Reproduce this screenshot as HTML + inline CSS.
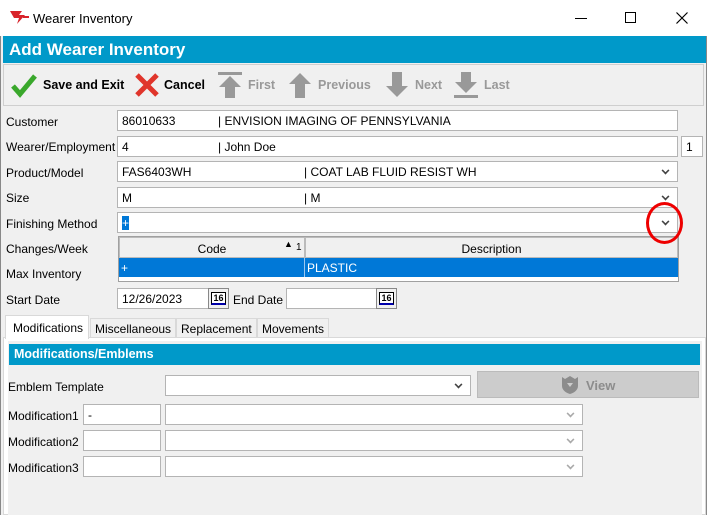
<!DOCTYPE html>
<html><head><meta charset="utf-8"><style>
*{margin:0;padding:0;box-sizing:border-box}
body{width:710px;height:515px;overflow:hidden;background:#fff;font-family:"Liberation Sans",sans-serif;font-size:12px;color:#000;position:relative}
.a{position:absolute}
.lbl{position:absolute;font-size:12px;color:#000}
.in{position:absolute;background:#fff;border:1px solid #b4b4b4;height:21px;font-size:12px;padding:3px 0 0 4px;white-space:nowrap}
.chev{position:absolute;right:8px;top:5px;width:7px;height:7px;border-right:2px solid #444;border-bottom:2px solid #444;transform:rotate(45deg) scale(.8);}
.tb{position:absolute;top:78px;font-weight:bold;font-size:12.5px}
.tab{position:absolute;top:318px;height:20px;border:1px solid #d9d9d9;background:#f0f0f0;font-size:12px;padding:3px 4px 0}
.cal{position:absolute;width:21px;height:21px;background:#f0f0f0;border:1px solid #888;font-size:9px;font-weight:bold;text-align:center;padding-top:4px}
.cal span{border:1px solid #000;border-bottom:2px solid #00a;background:#fff;padding:0 1px}
</style></head><body>
<svg class="a" style="left:9px;top:9px" width="22" height="16" viewBox="0 0 22 16"><path d="M1 2h12l-3 4h6l-8 9 2-6H5z" fill="#d8232a"/><path d="M14 8h6" stroke="#d8232a" stroke-width="2"/></svg>
<div class="lbl" style="left:33px;top:11px;font-size:13px">Wearer Inventory</div>
<div class="a" style="left:575px;top:18px;width:12px;height:1px;background:#000"></div>
<div class="a" style="left:625px;top:12px;width:11px;height:11px;border:1px solid #000"></div>
<svg class="a" style="left:676px;top:12px" width="12" height="12" viewBox="0 0 12 12"><path d="M0.5 0.5l11 11M11.5 0.5l-11 11" stroke="#000" stroke-width="1.2"/></svg>
<div class="a" style="left:0;top:36px;width:707px;height:479px;background:#f0f0f0;border-left:1px solid #888;border-right:1px solid #888"></div>
<div class="a" style="left:3px;top:36px;width:703px;height:27px;background:#0099c9"></div>
<div class="lbl" style="left:9px;top:40px;font-size:17px;font-weight:bold;color:#fff">Add Wearer Inventory</div>
<div class="a" style="left:3px;top:64px;width:701px;height:42px;background:#f0f0f0;border:1px solid #cfcfcf"></div>
<svg class="a" style="left:11px;top:72px" width="26" height="26" viewBox="0 0 26 26"><path d="M2 14l7 8L24 4" fill="none" stroke="#3aa82c" stroke-width="5"/></svg>
<div class="tb" style="left:43px">Save and Exit</div>
<svg class="a" style="left:134px;top:72px" width="26" height="26" viewBox="0 0 26 26"><path d="M3 3l20 20M23 3L3 23" stroke="#e0352b" stroke-width="5"/></svg>
<div class="tb" style="left:164px">Cancel</div>
<svg class="a" style="left:217px;top:71px" width="26" height="28" viewBox="0 0 26 28"><rect x="1" y="1" width="24" height="3" fill="#999"/><path d="M13 5l11 11h-6v11h-10v-11h-6z" fill="#999"/></svg>
<div class="tb" style="left:248px;color:#999">First</div>
<svg class="a" style="left:287px;top:71px" width="26" height="28" viewBox="0 0 26 28"><path d="M13 2l11 11h-6v14h-10v-14h-6z" fill="#999"/></svg>
<div class="tb" style="left:318px;color:#999">Previous</div>
<svg class="a" style="left:384px;top:71px" width="26" height="28" viewBox="0 0 26 28"><path d="M13 26l11-11h-6v-14h-10v14h-6z" fill="#999"/></svg>
<div class="tb" style="left:415px;color:#999">Next</div>
<svg class="a" style="left:453px;top:71px" width="26" height="28" viewBox="0 0 26 28"><path d="M13 22l11-11h-6v-10h-10v10h-6z" fill="#999"/><rect x="1" y="24" width="24" height="3" fill="#999"/></svg>
<div class="tb" style="left:484px;color:#999">Last</div>

<div class="lbl" style="left:6px;top:115px">Customer</div>
<div class="in" style="left:117px;top:110px;width:561px">86010633<span class="a" style="left:100px;top:3px">| ENVISION IMAGING OF PENNSYLVANIA</span></div>
<div class="lbl" style="left:6px;top:140px">Wearer/Employment</div>
<div class="in" style="left:117px;top:136px;width:561px">4<span class="a" style="left:100px;top:3px">| John Doe</span></div>
<div class="in" style="left:681px;top:136px;width:22px">1</div>
<div class="lbl" style="left:6px;top:166px">Product/Model</div>
<div class="in" style="left:117px;top:161px;width:561px">FAS6403WH<span class="a" style="left:186px;top:3px">| COAT LAB FLUID RESIST WH</span><i class="chev"></i></div>
<div class="lbl" style="left:6px;top:191px">Size</div>
<div class="in" style="left:117px;top:187px;width:561px">M<span class="a" style="left:186px;top:3px">| M</span><i class="chev"></i></div>
<div class="lbl" style="left:6px;top:217px">Finishing Method</div>
<div class="in" style="left:117px;top:212px;width:561px"><span style="background:#0078d7;color:#fff">+</span><i class="chev"></i></div>
<div class="lbl" style="left:6px;top:242px">Changes/Week</div>
<div class="lbl" style="left:6px;top:267px">Max Inventory</div>
<div class="a" style="left:118px;top:236px;width:561px;height:46px;background:#fff;border:1px solid #a0a0a0"></div>
<div class="a" style="left:119px;top:237px;width:186px;height:21px;background:#f0f0f0;border:1px solid #bbb;text-align:center;padding-top:4px">Code</div>
<div class="a" style="left:284px;top:239px;font-size:9px">▲</div><div class="a" style="left:296px;top:242px;font-size:10px">1</div>
<div class="a" style="left:305px;top:237px;width:373px;height:21px;background:#f0f0f0;border:1px solid #bbb;text-align:center;padding-top:4px">Description</div>
<div class="a" style="left:119px;top:258px;width:559px;height:19px;background:#0078d7"></div>
<div class="a" style="left:304px;top:258px;width:1px;height:19px;background:#9cc8f0"></div>
<div class="a" style="left:121px;top:261px;color:#fff">+</div>
<div class="a" style="left:307px;top:261px;color:#fff">PLASTIC</div>
<div class="a" style="left:646px;top:202px;width:37px;height:42px;border:3px solid #e00;border-radius:50%"></div>

<div class="lbl" style="left:6px;top:293px">Start Date</div>
<div class="in" style="left:117px;top:288px;width:112px">12/26/2023</div>
<div class="cal" style="left:208px;top:288px"><span>16</span></div>
<div class="lbl" style="left:233px;top:293px">End Date</div>
<div class="in" style="left:286px;top:288px;width:111px"></div>
<div class="cal" style="left:376px;top:288px"><span>16</span></div>

<div class="a" style="left:3px;top:337px;width:703px;height:178px;background:#fff;border:1px solid #d9d9d9"></div>
<div class="tab" style="left:90px">Miscellaneous</div>
<div class="tab" style="left:176px">Replacement</div>
<div class="tab" style="left:257px">Movements</div>
<div class="a" style="left:5px;top:315px;width:84px;height:24px;background:#fff;border:1px solid #d9d9d9;border-bottom:none;padding:5px 0 0 7px">Modifications</div>
<div class="a" style="left:8px;top:341px;width:694px;height:174px;background:#f0f0f0"></div>
<div class="a" style="left:9px;top:344px;width:691px;height:21px;background:#0099c9;color:#fff;font-weight:bold;font-size:12.5px;padding:3px 0 0 5px">Modifications/Emblems</div>
<div class="lbl" style="left:8px;top:380px">Emblem Template</div>
<div class="in" style="left:165px;top:375px;width:306px"><i class="chev"></i></div>
<div class="a" style="left:477px;top:371px;width:222px;height:27px;background:#cccccc;border:1px solid #bbb"></div>
<svg class="a" style="left:561px;top:375px" width="18" height="19" viewBox="0 0 18 19"><path d="M1 2l3 2 5-3 5 3 3-2v9c0 4-4 7-8 8-4-1-8-4-8-8z" fill="#8c8c8c"/><path d="M6 8l3 4 3-4z" fill="#ccc"/></svg>
<div class="a" style="left:586px;top:378px;font-weight:bold;font-size:13px;color:#8c8c8c">View</div>
<div class="lbl" style="left:8px;top:409px">Modification1</div>
<div class="in" style="left:83px;top:404px;width:78px">-</div>
<div class="in" style="left:165px;top:404px;width:418px"><i class="chev" style="border-color:#aaa"></i></div>
<div class="lbl" style="left:8px;top:435px">Modification2</div>
<div class="in" style="left:83px;top:430px;width:78px"></div>
<div class="in" style="left:165px;top:430px;width:418px"><i class="chev" style="border-color:#aaa"></i></div>
<div class="lbl" style="left:8px;top:461px">Modification3</div>
<div class="in" style="left:83px;top:456px;width:78px"></div>
<div class="in" style="left:165px;top:456px;width:418px"><i class="chev" style="border-color:#aaa"></i></div>
</body></html>
